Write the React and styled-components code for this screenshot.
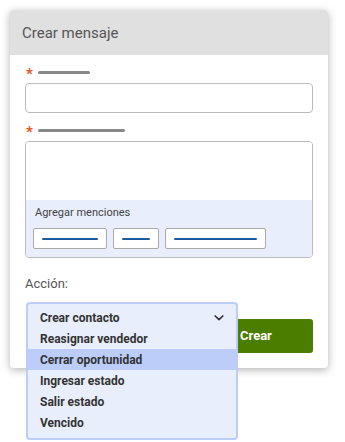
import React from "react";
import styled, { createGlobalStyle } from "styled-components";

const GlobalStyle = createGlobalStyle`
  html, body {
    margin: 0;
    min-height: 100vh;
    background: #ffffff;
    font-family: Roboto, "Liberation Sans", sans-serif;
  }
`;

const Page = styled.div`
  min-height: 442px;
  box-sizing: border-box;
  padding: 10px;
`;

const Card = styled.div`
  width: 318px;
  background: #ffffff;
  border-radius: 4px;
  box-shadow: 0 2px 8px rgba(0, 0, 0, 0.3);
`;

const Header = styled.div`
  height: 45px;
  display: flex;
  align-items: center;
  padding: 0 12px;
  background: #e0e0e0;
  border-radius: 4px 4px 0 0;
  color: #555555;
  font-size: 15px;
`;

const Body = styled.div`
  padding: 10px 15px 15px;
`;

const LabelRow = styled.div`
  display: flex;
  align-items: center;
  height: 14px;
  margin-top: ${(p) => p.$top || 0}px;
  margin-bottom: 4px;
`;

const Star = styled.span`
  color: #e4531c;
  font-size: 15px;
  font-weight: 700;
  line-height: 14px;
  width: 13px;
  padding-left: 1px;
  padding-top: 4px;
  box-sizing: border-box;
`;

const Bar = styled.span`
  display: block;
  width: ${(p) => p.$w}px;
  height: 3px;
  border-radius: 2px;
  background: #888888;
`;

const Input = styled.div`
  height: 30px;
  box-sizing: border-box;
  border: 1px solid #bbbbbb;
  border-radius: 4px;
`;

const TextBox = styled.div`
  border: 1px solid #bbbbbb;
  border-radius: 4px;
  overflow: hidden;
`;

const TextArea = styled.div`
  height: 58px;
  background: #ffffff;
`;

const Mentions = styled.div`
  background: #e8eefc;
  padding: 6px 7px 8px;
`;

const MentionsLabel = styled.div`
  font-size: 11px;
  line-height: 14px;
  color: #444444;
  padding-left: 2px;
  margin-bottom: 8px;
`;

const Chips = styled.div`
  display: flex;
  gap: 6px;
`;

const Chip = styled.div`
  height: 21px;
  box-sizing: border-box;
  padding: 0 8px;
  display: flex;
  align-items: center;
  background: #ffffff;
  border: 1px solid #aaaaaa;
  border-radius: 2px;
`;

const ChipLine = styled.span`
  display: block;
  width: ${(p) => p.$w}px;
  height: 2px;
  border-radius: 1px;
  background: #1b5a9c;
`;

const ActionLabel = styled.div`
  margin-top: 18px;
  font-size: 13px;
  line-height: 16px;
  color: #555555;
`;

const Footer = styled.div`
  display: flex;
  margin-top: 10px;
  height: 51px;
`;

const SelectSlot = styled.div`
  position: relative;
  flex: 1;
`;

const Menu = styled.ul`
  position: absolute;
  z-index: 2;
  top: 0;
  left: 1px;
  width: 212px;
  box-sizing: border-box;
  margin: 0;
  padding: 3px 0 5px;
  list-style: none;
  background: #e8eefc;
  border: 2px solid #bccdfa;
  border-radius: 4px;
`;

const Option = styled.li`
  display: flex;
  align-items: center;
  justify-content: space-between;
  height: 21px;
  padding: 0 12px;
  font-size: 12px;
  font-weight: 700;
  color: #333333;
  background: ${(p) => (p.$active ? "#bccdfa" : "transparent")};
`;

const CreateButton = styled.button`
  align-self: flex-end;
  width: 116px;
  height: 34px;
  border: none;
  border-radius: 3px;
  background: #4b7d00;
  color: #ffffff;
  font-family: Roboto, "Liberation Sans", sans-serif;
  font-size: 13px;
  font-weight: 700;
  padding: 0 0 2px 43px;
  text-align: left;
`;

const Chevron = () => (
  <svg width="10" height="6" viewBox="0 0 10 6">
    <path
      d="M1.2 1 L5 4.6 L8.8 1"
      fill="none"
      stroke="#333"
      strokeWidth="1.7"
      strokeLinecap="round"
      strokeLinejoin="round"
    />
  </svg>
);

const options = [
  "Crear contacto",
  "Reasignar vendedor",
  "Cerrar oportunidad",
  "Ingresar estado",
  "Salir estado",
  "Vencido",
];

export default function App() {
  return (
    <Page>
      <GlobalStyle />
      <Card>
        <Header>Crear mensaje</Header>
        <Body>
          <LabelRow>
            <Star>*</Star>
            <Bar $w={52} />
          </LabelRow>
          <Input />
          <LabelRow $top={10}>
            <Star>*</Star>
            <Bar $w={87} />
          </LabelRow>
          <TextBox>
            <TextArea />
            <Mentions>
              <MentionsLabel>Agregar menciones</MentionsLabel>
              <Chips>
                <Chip>
                  <ChipLine $w={56} />
                </Chip>
                <Chip>
                  <ChipLine $w={28} />
                </Chip>
                <Chip>
                  <ChipLine $w={83} />
                </Chip>
              </Chips>
            </Mentions>
          </TextBox>
          <ActionLabel>Acción:</ActionLabel>
          <Footer>
            <SelectSlot>
              <Menu>
                {options.map((o, i) => (
                  <Option key={o} $active={i === 2}>
                    {o}
                    {i === 0 && <Chevron />}
                  </Option>
                ))}
              </Menu>
            </SelectSlot>
            <CreateButton>Crear</CreateButton>
          </Footer>
        </Body>
      </Card>
    </Page>
  );
}
